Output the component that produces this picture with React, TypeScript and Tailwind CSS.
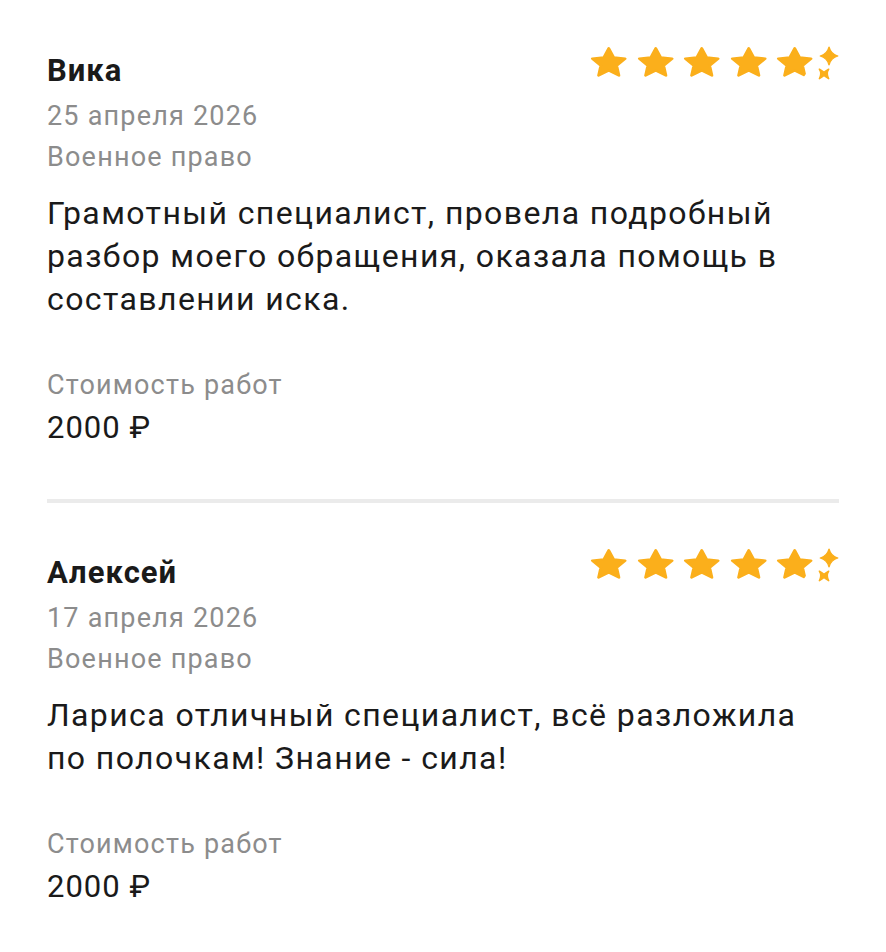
const reviews = [
  {
    name: "Вика",
    date: "25 апреля 2026",
    category: "Военное право",
    text: "Грамотный специалист, провела подробный разбор моего обращения, оказала помощь в составлении иска.",
    price: "2000 ₽",
  },
  {
    name: "Алексей",
    date: "17 апреля 2026",
    category: "Военное право",
    text: "Лариса отличный специалист, всё разложила по полочкам! Знание - сила!",
    price: "2000 ₽",
  },
];

const STAR = "M12 2.2l2.9 6.1 6.6.8-4.9 4.6 1.3 6.6L12 17l-5.9 3.3 1.3-6.6-4.9-4.6 6.6-.8z";
const GOLD = "#FBAF1B";

const Star = () => (
  <svg viewBox="0 0 24 24" preserveAspectRatio="none" className="w-[41.5px] h-[36px]">
    <path d={STAR} fill={GOLD} stroke={GOLD} strokeWidth="1.6" strokeLinejoin="round" />
  </svg>
);

// last star: lower right leg trimmed, with two sparkles
const SparkStar = ({ id }: { id: string }) => (
  <svg viewBox="0 0 40 24" preserveAspectRatio="none" className="w-[69px] h-[36px]">
    <defs>
      <clipPath id={id}>
        <path d="M0 0H24V10.5L16.8 22H0Z" />
      </clipPath>
    </defs>
    <path d={STAR} fill={GOLD} stroke={GOLD} strokeWidth="1.6" strokeLinejoin="round" clipPath={`url(#${id})`} />
    <path
      d="M31.9 1.4Q33 6.1 37 7.3Q33 8.5 31.9 13.2Q30.8 8.5 26.8 7.3Q30.8 6.1 31.9 1.4Z"
      fill={GOLD}
      stroke={GOLD}
      strokeWidth="0.8"
      strokeLinejoin="round"
    />
    <path
      d="M26.3 16.1Q28.7 17.7 29 18.4Q29.3 17.7 31.7 16.1Q30.1 18.9 31.7 22.5Q29.3 20.9 29 20.2Q28.7 20.9 26.3 22.5Q27.9 18.9 26.3 16.1Z"
      fill={GOLD}
      stroke={GOLD}
      strokeWidth="0.9"
      strokeLinejoin="round"
    />
  </svg>
);

const Rating = ({ id }: { id: string }) => (
  <div className="flex items-center gap-[5px]">
    <Star />
    <Star />
    <Star />
    <Star />
    <SparkStar id={id} />
  </div>
);

export default function App() {
  return (
    <div className="min-h-screen bg-white px-[47px] pt-[46px] text-[#1a1a1a]" style={{ fontFamily: "Roboto, 'Noto Sans', sans-serif" }}>
      {reviews.map((r, i) => (
        <div key={i}>
          {i > 0 && <div className="h-[4px] bg-[#ebebeb] mt-[49px] mb-[45px]" />}
          <div className="flex items-start justify-between">
            <div className="flex flex-col">
              <div className="text-[31px] tracking-[1px] font-bold leading-[50px]">{r.name}</div>
              <div className="text-[27px] tracking-[1.2px] leading-[41px] text-[#8c8c8c]">{r.date}</div>
              <div className="text-[27px] tracking-[1.2px] leading-[41px] text-[#8c8c8c]">{r.category}</div>
            </div>
            <div className="mr-[-4px] mt-[-1px]">
              <Rating id={`cut${i}`} />
            </div>
          </div>
          <p className="text-[32px] tracking-[1.4px] leading-[43px] mt-[14px] pr-[30px]">{r.text}</p>
          <div className="mt-[44px] text-[27px] tracking-[1.2px] leading-[41px] text-[#8c8c8c]">Стоимость работ</div>
          <div className="text-[31px] tracking-[1px] leading-[44px]">{r.price}</div>
        </div>
      ))}
    </div>
  );
}
